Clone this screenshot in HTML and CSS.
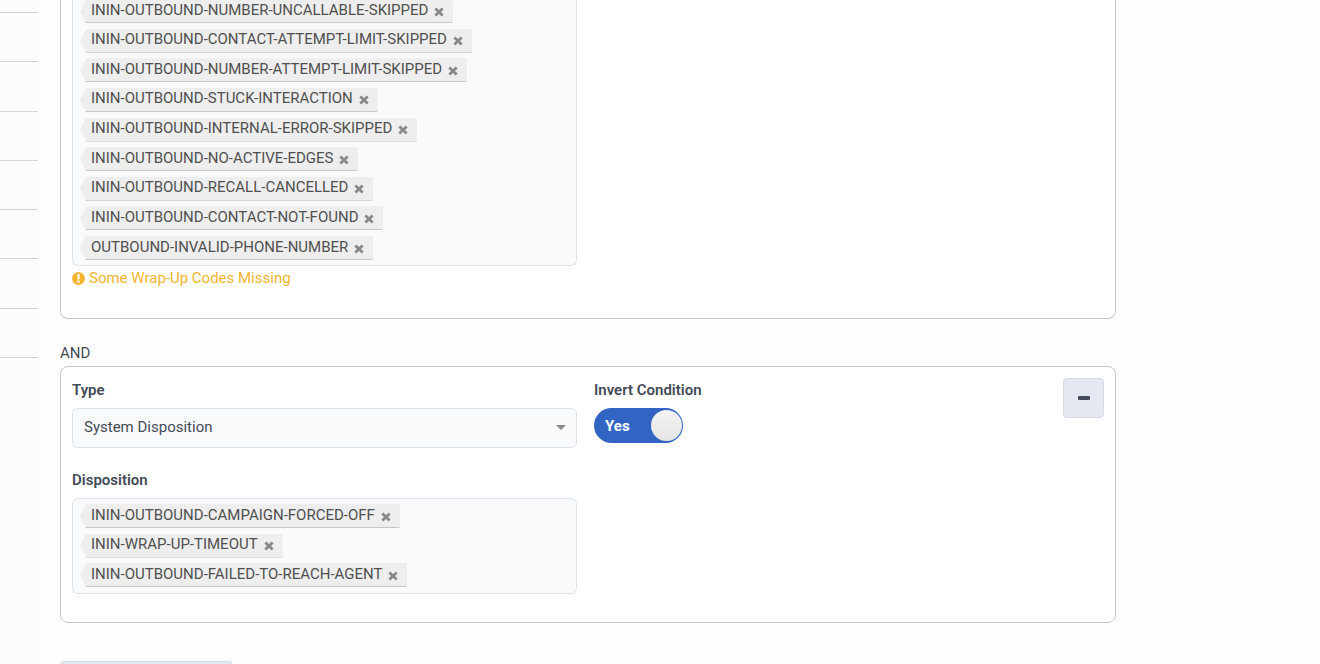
FILE: index.html
```html
<!DOCTYPE html>
<html lang="en">
<head>
<meta charset="utf-8">
<title>Rule Conditions</title>
<link rel="stylesheet" href="styles.css">
</head>
<body>
<svg class="defs" aria-hidden="true">
  <symbol id="cross" viewBox="0 0 9 9"><path d="M1.2 1.4L7.8 7.6M7.8 1.4L1.2 7.6" fill="none" stroke="currentColor" stroke-width="2.5"/></symbol>
</svg>
<div class="page">
  <aside class="rail">
    <ul class="rail-rows"><li></li><li></li><li></li><li></li><li></li><li></li><li></li></ul>
  </aside>
  <main class="content">
    <section class="card card-continued">
      <div class="columns">
        <div>
          <ul class="tags tags-continued">
            <li class="tag">ININ-OUTBOUND-NUMBER-UNCALLABLE-SKIPPED<button class="remove" aria-label="Remove"><svg><use href="#cross"/></svg></button></li>
            <li class="tag">ININ-OUTBOUND-CONTACT-ATTEMPT-LIMIT-SKIPPED<button class="remove" aria-label="Remove"><svg><use href="#cross"/></svg></button></li>
            <li class="tag">ININ-OUTBOUND-NUMBER-ATTEMPT-LIMIT-SKIPPED<button class="remove" aria-label="Remove"><svg><use href="#cross"/></svg></button></li>
            <li class="tag">ININ-OUTBOUND-STUCK-INTERACTION<button class="remove" aria-label="Remove"><svg><use href="#cross"/></svg></button></li>
            <li class="tag">ININ-OUTBOUND-INTERNAL-ERROR-SKIPPED<button class="remove" aria-label="Remove"><svg><use href="#cross"/></svg></button></li>
            <li class="tag">ININ-OUTBOUND-NO-ACTIVE-EDGES<button class="remove" aria-label="Remove"><svg><use href="#cross"/></svg></button></li>
            <li class="tag">ININ-OUTBOUND-RECALL-CANCELLED<button class="remove" aria-label="Remove"><svg><use href="#cross"/></svg></button></li>
            <li class="tag">ININ-OUTBOUND-CONTACT-NOT-FOUND<button class="remove" aria-label="Remove"><svg><use href="#cross"/></svg></button></li>
            <li class="tag">OUTBOUND-INVALID-PHONE-NUMBER<button class="remove" aria-label="Remove"><svg><use href="#cross"/></svg></button></li>
          </ul>
          <p class="warning">
            <svg class="warning-icon" viewBox="0 0 13 13" aria-hidden="true"><circle cx="6.5" cy="6.5" r="6.5" fill="currentColor"/><path d="M5.2 2h2.6L7.4 7.5H5.6z" fill="#fff"/><rect x="5.4" y="8.5" width="2.2" height="2.2" fill="#fff"/></svg>
            Some Wrap-Up Codes Missing
          </p>
        </div>
      </div>
    </section>

    <p class="operator">AND</p>

    <section class="card">
      <div class="columns">
        <div class="field">
          <label class="label" for="type">Type</label>
          <div class="select-wrap">
            <select class="select" id="type"><option>System Disposition</option></select>
            <svg class="caret" viewBox="0 0 10 5" aria-hidden="true"><path d="M0 0h10L5 5z" fill="#888"/></svg>
          </div>
        </div>
        <div class="invert">
          <div class="field">
            <label class="label" for="invert">Invert Condition</label>
            <label class="toggle">
              <input class="toggle-input" type="checkbox" id="invert" checked>
              <span class="toggle-text">Yes</span>
              <span class="knob"></span>
            </label>
          </div>
          <button class="minus" aria-label="Remove condition"><svg viewBox="0 0 12 4" aria-hidden="true"><rect width="12" height="4" rx="1" fill="#444a57"/></svg></button>
        </div>
        <div class="field">
          <span class="label" id="disposition">Disposition</span>
          <ul class="tags" aria-labelledby="disposition">
            <li class="tag">ININ-OUTBOUND-CAMPAIGN-FORCED-OFF<button class="remove" aria-label="Remove"><svg><use href="#cross"/></svg></button></li>
            <li class="tag">ININ-WRAP-UP-TIMEOUT<button class="remove" aria-label="Remove"><svg><use href="#cross"/></svg></button></li>
            <li class="tag">ININ-OUTBOUND-FAILED-TO-REACH-AGENT<button class="remove" aria-label="Remove"><svg><use href="#cross"/></svg></button></li>
          </ul>
        </div>
      </div>
    </section>
    <button class="add" aria-label="Add condition"></button>
  </main>
</div>
</body>
</html>
```
FILE: styles.css
```css
* { box-sizing: border-box; }
body {
  margin: 0;
  height: 100vh;
  overflow: hidden;
  background: #fefefe;
  color: #444a57;
  font: 15px/20px Roboto, sans-serif;
}
ul, p { margin: 0; padding: 0; list-style: none; }
button { font: inherit; cursor: pointer; }
.defs { display: none; }
.page { display: flex; height: 100%; overflow: hidden; }
.rail { flex: none; width: 38px; background: #fcfcfc; }
.rail-rows {
  display: flex;
  flex-direction: column;
  height: 358px;
  padding-top: 12px;
  border-bottom: 1px solid #d3d3d5;
}
.rail-rows li { flex: 1; border-top: 1px solid #d3d3d5; }
.content { flex: 1; min-width: 0; padding: 0 204px 0 22px; }
.card {
  padding: 11px 11px 28px;
  border: 1px solid #c1c8d6;
  border-radius: 8px;
  background: #fff;
}
.card-continued {
  padding-top: 0;
  padding-bottom: 30px;
  border-top: 0;
  border-radius: 0 0 8px 8px;
}
.columns {
  display: grid;
  grid-template-columns: 505fr 510fr;
  gap: 20px 17px;
}
.field { display: flex; flex-direction: column; align-items: stretch; gap: 6px; }
.label { padding: 1px 0; line-height: 22px; font-weight: 600; }
.tags {
  display: flex;
  flex-direction: column;
  justify-content: space-between;
  align-items: flex-start;
  height: 96px;
  padding: 5px 7px 6px;
  border: 1px solid #dbe2ec;
  border-radius: 6px;
  background: #f9fafc;
}
.tags-continued {
  height: 266px;
  padding-top: 0;
  padding-bottom: 5px;
  border-top: 0;
  border-radius: 0 0 6px 6px;
}
.tag {
  display: flex;
  align-items: center;
  height: 24px;
  padding: 0 9px 2px 11px;
  border-bottom: 1px solid #c8c8c8;
  border-radius: 2px;
  background: #eee;
  color: #505050;
  white-space: nowrap;
  clip-path: polygon(6px 0, 100% 0, 100% 100%, 6px 100%, 0 50%);
}
.tags-continued .tag:first-child { height: 23px; }
.remove {
  display: flex;
  margin-left: 6px;
  padding: 4px 0 0;
  border: 0;
  background: none;
  color: #888;
}
.remove svg { width: 10px; height: 10px; }
.warning {
  display: flex;
  align-items: center;
  gap: 4px;
  padding-top: 2px;
  color: #f3b52f;
}
.warning-icon { width: 13px; height: 13px; }
.operator { padding: 24px 0 3px; }
.select-wrap { position: relative; }
.select {
  display: block;
  width: 100%;
  height: 40px;
  padding: 0 30px 2px 11px;
  border: 1px solid #dbe2ec;
  border-radius: 6px;
  background: #f9fafc;
  color: inherit;
  font: inherit;
  appearance: none;
}
.caret { position: absolute; top: 17px; right: 11px; width: 10px; height: 5px; }
.invert { display: flex; justify-content: space-between; align-items: flex-start; }
.toggle {
  display: flex;
  justify-content: space-between;
  align-items: center;
  width: 89px;
  height: 35px;
  padding: 0 1px 0 11px;
  border-radius: 18px;
  background: #3264c4;
  color: #fff;
  font-weight: 700;
  cursor: pointer;
}
.toggle-input { position: absolute; opacity: 0; }
.knob {
  width: 31px;
  height: 31px;
  border-radius: 50%;
  background: linear-gradient(#f4f4f4, #e4e4e4);
}
.minus {
  display: flex;
  justify-content: center;
  align-items: center;
  width: 41px;
  height: 40px;
  padding: 0;
  border: 1px solid #d5dbe3;
  border-radius: 4px;
  background: #e4e9f1;
}
.minus svg { width: 12px; height: 4px; }
.add {
  display: block;
  width: 173px;
  height: 40px;
  margin-top: 38px;
  border: 1px solid #d5dbe3;
  border-radius: 4px;
  background: #e4e9f1;
}
```
